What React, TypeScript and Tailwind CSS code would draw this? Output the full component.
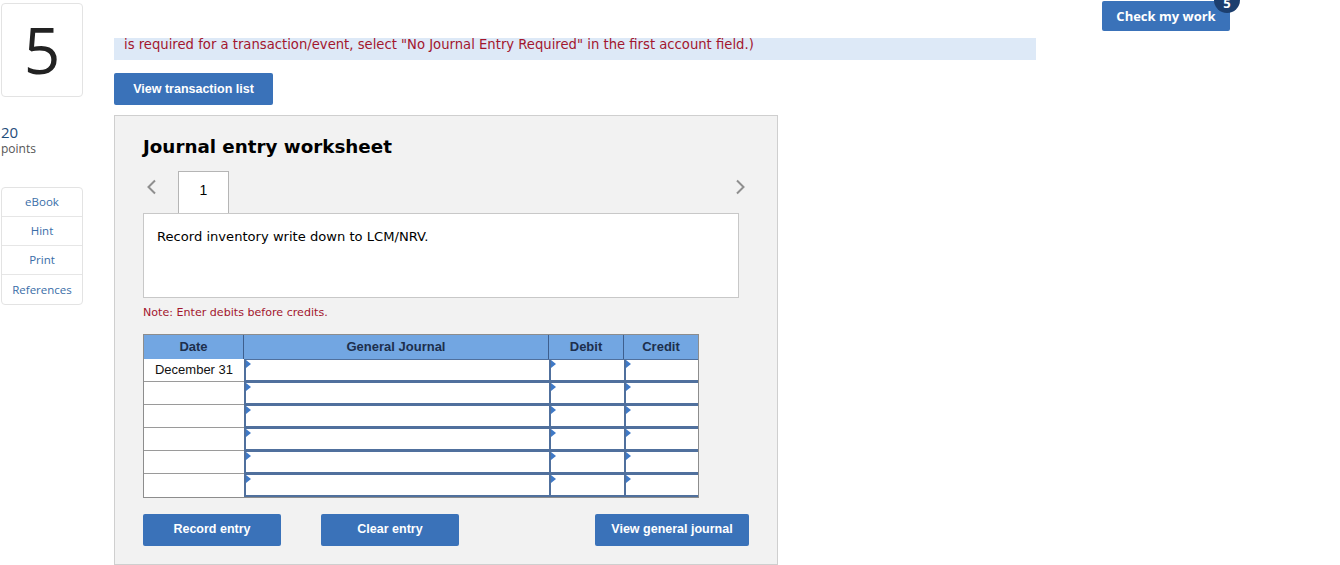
import React from 'react';

const verdana = { fontFamily: '"DejaVu Sans", Verdana, sans-serif' };

function Triangle() {
  return <span className="absolute left-0 top-0 h-0 w-0 border-y-[4px] border-l-[5px] border-y-transparent border-l-[#3f79c6]" />;
}

function Chevron({ dir }: { dir: 'left' | 'right' }) {
  return (
    <svg width="12" height="16" viewBox="0 0 12 16" className="text-[#8f8f8f]">
      <path
        d={dir === 'left' ? 'M9 1.5 L2.5 8 L9 14.5' : 'M3 1.5 L9.5 8 L3 14.5'}
        fill="none"
        stroke="currentColor"
        strokeWidth="2"
      />
    </svg>
  );
}

function BlueButton({ label, className }: { label: string; className: string }) {
  return (
    <button
      className={`flex items-center justify-center rounded-[2px] bg-[#3a72b9] text-[12.5px] font-bold text-white font-['Liberation_Sans',Arial,sans-serif] ${className}`}
    >
      {label}
    </button>
  );
}

export default function App() {
  const rows = ['December 31', '', '', '', '', ''];
  const sideLinks = ['eBook', 'Hint', 'Print', 'References'];

  return (
    <div className="flex h-[565px] w-[1340px] overflow-hidden bg-white">
      {/* Sidebar */}
      <div className="ml-[1px] flex w-[82px] flex-col pt-[3px] font-['Open_Sans',sans-serif]">
        <div className="flex h-[94px] items-center justify-center rounded-[4px] border border-[#e3e3e3] text-[64px] font-normal leading-none text-[#222]">
          5
        </div>
        <div className="mt-[26px] text-[15px] leading-[18px] text-[#1f4d7a]">20</div>
        <div className="text-[12px] leading-[16px] text-[#555]">points</div>
        <div className="mt-[30px] flex flex-col rounded-[4px] border border-[#e3e3e3]">
          {sideLinks.map((l, i) => (
            <div
              key={l}
              className={`flex h-[29px] items-center justify-center text-[11.5px] text-[#3a6ea8] ${i < 3 ? 'border-b border-[#e6e6e6]' : ''}`}
            >
              {l}
            </div>
          ))}
        </div>
      </div>

      {/* Main column */}
      <div className="ml-[31px] flex w-[922px] flex-col pt-[38px]">
        <div className="h-[23px] bg-[#dde9f7] pl-[10px] text-[13.2px] leading-[13px] text-[#a3162e]" style={verdana}>
          is required for a transaction/event, select "No Journal Entry Required" in the first account field.)
        </div>

        <BlueButton label="View transaction list" className="mt-[13px] h-[32px] w-[159px]" />

        {/* Worksheet */}
        <div className="mt-[10px] flex h-[460px] w-[664px] flex-col border border-[#cfcfcf] bg-[#f2f2f2] px-[28px] pt-[20px]">
          <h2 className="text-[18.3px] font-bold leading-[22px] text-black" style={verdana}>
            Journal entry worksheet
          </h2>

          <div className="mt-[14px] flex h-[41px] items-center">
            <span className="ml-[3px] mt-[-10px]">
              <Chevron dir="left" />
            </span>
            <div className="relative z-10 ml-[20px] flex h-[42px] w-[51px] items-start justify-center border border-b-0 border-[#b5b5b5] bg-white pt-[8px] text-[14px] text-black font-['Liberation_Sans',Arial,sans-serif]">
              1
            </div>
            <span className="ml-auto mr-[3px] mt-[-10px]">
              <Chevron dir="right" />
            </span>
          </div>

          <div className="h-[85px] w-[596px] border border-[#c8c8c8] bg-white px-[13px] pt-[13px] text-[13.1px] text-black" style={verdana}>
            Record inventory write down to LCM/NRV.
          </div>

          <div className="mt-[8px] text-[11.1px] leading-[14px] text-[#a3162e]" style={verdana}>
            Note: Enter debits before credits.
          </div>

          {/* Table */}
          <div className="mt-[14px] w-[556px] border border-[#8d8d8d] font-['Liberation_Sans',Arial,sans-serif]">
            <div className="grid grid-cols-[100px_305px_75px_74px] bg-[#72a6e2] text-[13px] font-bold text-[#1d2f4c]">
              <div className="flex h-[24px] items-center justify-center border-r border-[#3e5f8e]">Date</div>
              <div className="flex h-[24px] items-center justify-center border-r border-[#3e5f8e]">General Journal</div>
              <div className="flex h-[24px] items-center justify-center border-r border-[#3e5f8e]">Debit</div>
              <div className="flex h-[24px] items-center justify-center">Credit</div>
            </div>
            {rows.map((d, i) => (
              <div key={i} className="grid grid-cols-[100px_305px_75px_74px] bg-white">
                <div className={`flex h-[23px] items-center justify-center text-[13px] text-[#111] ${i < 5 ? 'border-b border-[#9a9a9a]' : ''}`}>
                  {d}
                </div>
                <div className="relative h-[23px] border-b-2 border-l-2 border-t-[1px] border-[#50709d]">
                  <Triangle />
                </div>
                <div className="relative h-[23px] border-b-2 border-l-2 border-t-[1px] border-[#50709d]">
                  <Triangle />
                </div>
                <div className="relative h-[23px] border-b-2 border-l-2 border-t-[1px] border-[#50709d]">
                  <Triangle />
                </div>
              </div>
            ))}
          </div>

          <div className="mt-[16px] flex w-[606px]">
            <BlueButton label="Record entry" className="h-[32px] w-[138px]" />
            <BlueButton label="Clear entry" className="ml-[40px] h-[32px] w-[138px]" />
            <BlueButton label="View general journal" className="ml-auto h-[32px] w-[154px]" />
          </div>
        </div>
      </div>

      {/* Check my work */}
      <div className="ml-[66px] pt-[1px]">
        <div className="relative">
          <button className="flex h-[30px] w-[128px] items-center justify-center rounded-[2px] bg-[#3a72b9] pt-[1px] text-[13px] font-bold text-white font-['Open_Sans',sans-serif]">
            Check my work
          </button>
          <span className="absolute left-[112px] top-[-14px] flex h-[26px] w-[26px] items-end justify-center rounded-full bg-[#1c3e6e] pb-[3px] text-[13px] font-bold leading-none text-white font-['Open_Sans',sans-serif]">
            5
          </span>
        </div>
      </div>
    </div>
  );
}
